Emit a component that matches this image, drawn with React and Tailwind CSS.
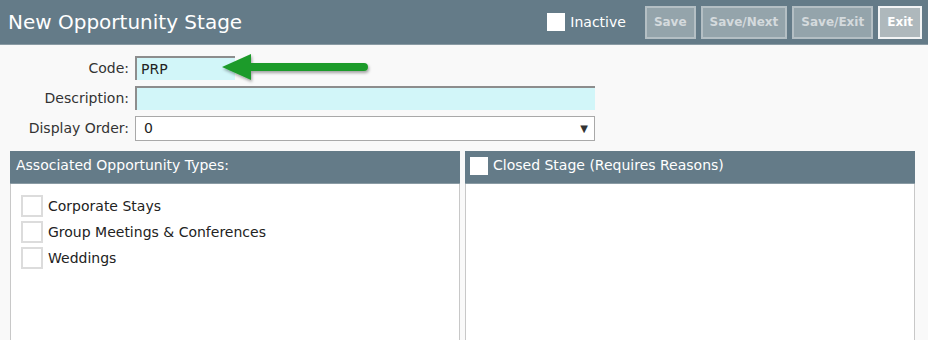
const TYPES = ['Corporate Stays', 'Group Meetings & Conferences', 'Weddings']

function Button({ label, primary }) {
  return (
    <button
      className={
        primary
          ? 'h-[33px] px-[7px] border-2 border-[#f2f4f5] bg-[#aeb8bc] text-white text-[12px] font-bold'
          : 'h-[33px] px-[7px] border-2 border-[#b4bfc4] bg-[#94a4ab] text-[#d4dadd] text-[12px] font-bold'
      }
    >
      {label}
    </button>
  )
}

function GreenArrow() {
  return (
    <svg className="absolute left-[218px] top-[50px]" width="160" height="36" viewBox="0 0 160 36">
      <defs>
        <filter id="sh" x="-10%" y="-30%" width="120%" height="160%">
          <feDropShadow dx="1" dy="2" stdDeviation="1.5" floodColor="#000" floodOpacity="0.35" />
        </filter>
      </defs>
      <g filter="url(#sh)">
        <path d="M4 17 L33 4 L33 13 L146 13 Q150 13 150 17 Q150 21 146 21 L33 21 L33 30 Z" fill="#1f9b2c" />
      </g>
    </svg>
  )
}

export default function App() {
  return (
    <div className="relative w-[928px] h-[340px] overflow-hidden bg-[#f9f9f9] text-[#333] font-['DejaVu_Sans',Verdana,sans-serif]">
      {/* Top bar */}
      <header className="h-[45px] bg-[#647b88] border-b border-[#8a9ba4] flex items-center pl-[8px] pr-[6px]">
        <h1 className="flex-1 text-[20px] text-white">New Opportunity Stage</h1>
        <label className="flex items-center gap-[5px] mr-[19px]">
          <span className="w-[18px] h-[18px] bg-white" />
          <span className="text-[14px] text-white">Inactive</span>
        </label>
        <div className="flex items-center gap-[5px]">
          <Button label="Save" />
          <Button label="Save/Next" />
          <Button label="Save/Exit" />
          <Button label="Exit" primary />
        </div>
      </header>

      {/* Form */}
      <div className="flex flex-col gap-[6px] pt-[11px] text-[14px]">
        <div className="flex items-center">
          <span className="w-[135px] text-right pr-[6px]">Code:</span>
          <div className="w-[100px] h-[24px] bg-[#d2f6f9] border-t-2 border-l-2 border-[#8d8d8d] flex items-center pl-[4px] text-[#222]">
            PRP
          </div>
        </div>
        <div className="flex items-center">
          <span className="w-[135px] text-right pr-[6px]">Description:</span>
          <div className="w-[460px] h-[24px] bg-[#d2f6f9] border-t-2 border-l-2 border-[#8d8d8d]" />
        </div>
        <div className="flex items-center">
          <span className="w-[135px] text-right pr-[6px]">Display Order:</span>
          <div className="w-[460px] h-[25px] bg-white border border-[#a9a9a9] flex items-center justify-between pl-[8px] pr-[6px] text-[#222]">
            <span>0</span>
            <span className="text-[10px] text-[#333]">▼</span>
          </div>
        </div>
      </div>

      <GreenArrow />

      {/* Panels */}
      <div className="flex gap-[5px] pl-[10px] pt-[10px] text-[14px]">
        <section className="w-[450px] flex flex-col">
          <div className="h-[33px] bg-[#647b88] border-b border-[#8a9ba4] flex items-center px-[6px] pb-[3px] text-white">
            Associated Opportunity Types:
          </div>
          <div className="h-[200px] bg-white border-x border-[#c8c8c8] pt-[11px] pl-[10px] flex flex-col gap-[4px]">
            {TYPES.map(t => (
              <label key={t} className="flex items-center gap-[5px] text-[#222]">
                <span className="w-[22px] h-[22px] border-2 border-[#dcdcdc] bg-white" />
                <span>{t}</span>
              </label>
            ))}
          </div>
        </section>
        <section className="w-[450px] flex flex-col">
          <div className="h-[33px] bg-[#647b88] border-b border-[#8a9ba4] flex items-center gap-[5px] px-[5px] pb-[2px] text-white">
            <span className="w-[18px] h-[18px] bg-white" />
            <span className="pb-[1px]">Closed Stage (Requires Reasons)</span>
          </div>
          <div className="h-[200px] bg-white border-x border-[#c8c8c8]" />
        </section>
      </div>
    </div>
  )
}
